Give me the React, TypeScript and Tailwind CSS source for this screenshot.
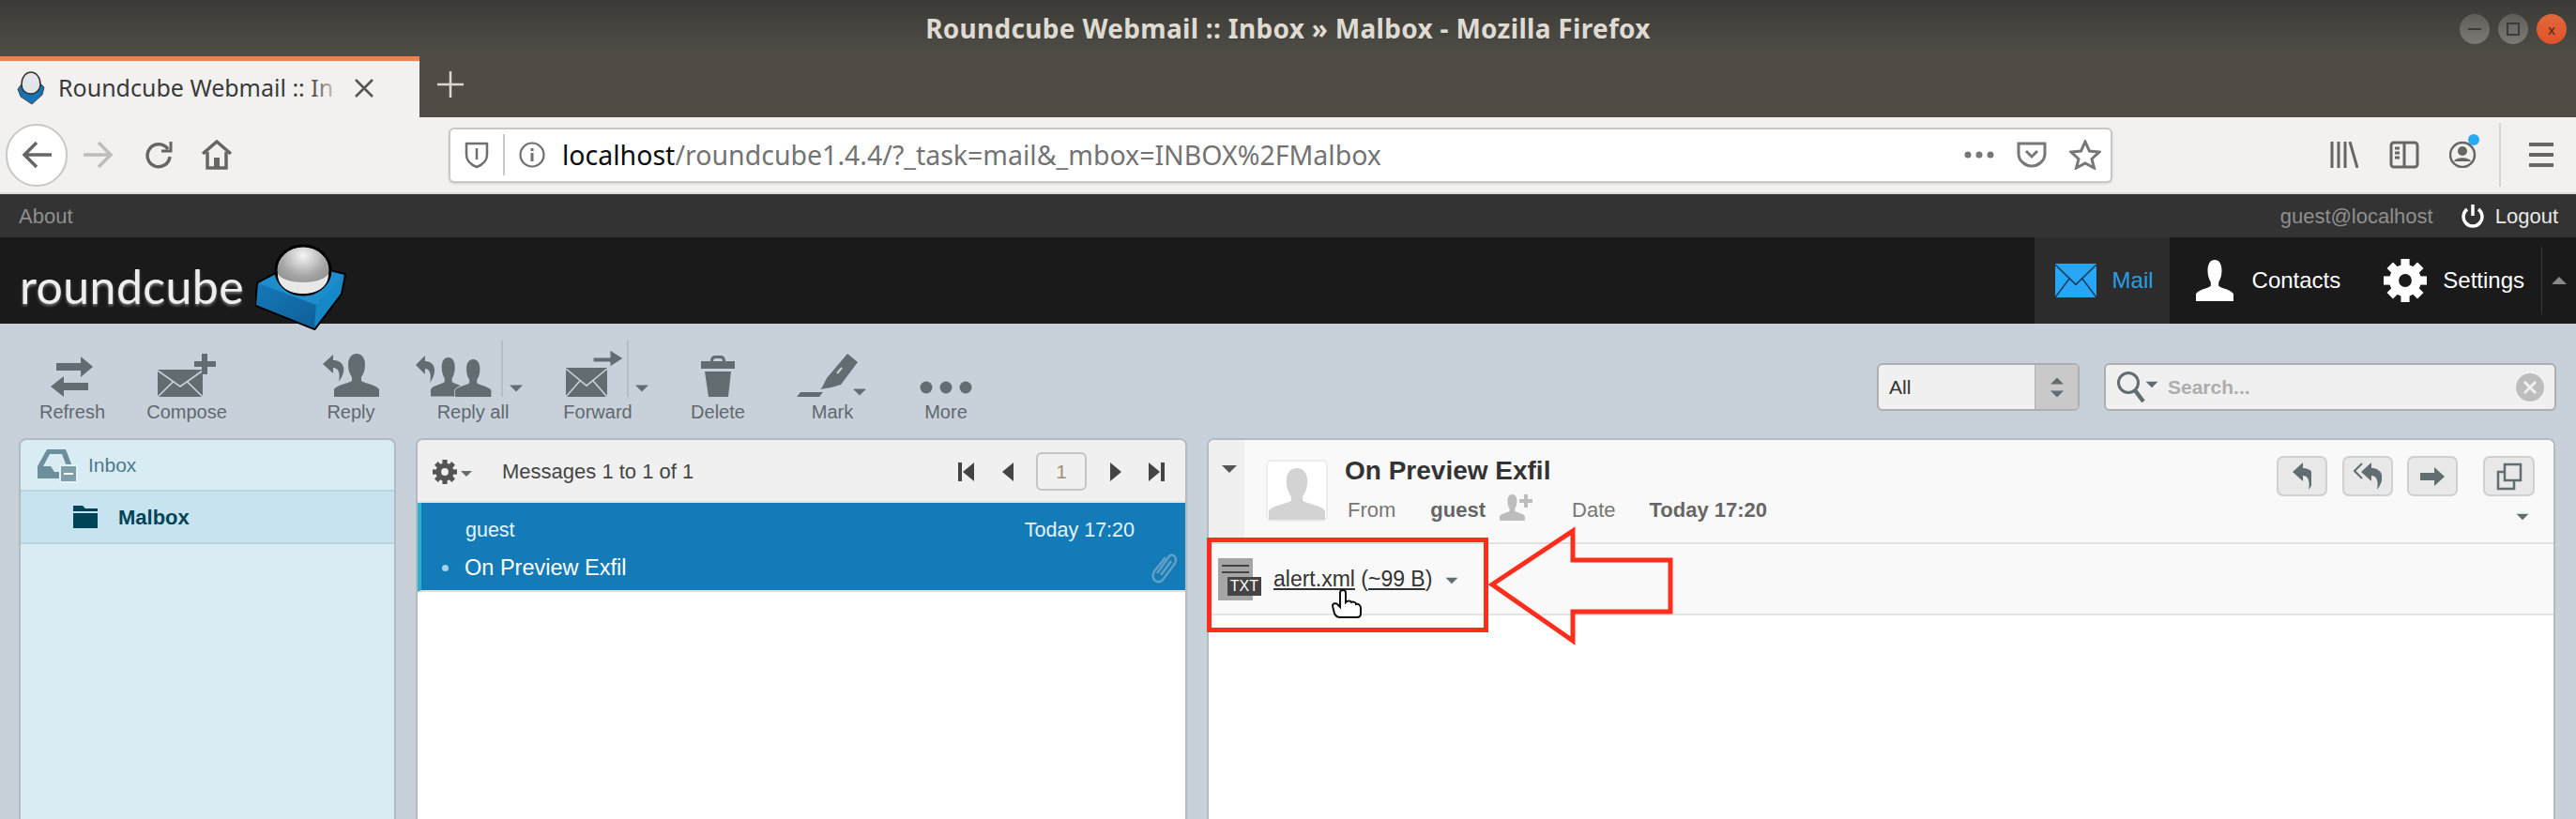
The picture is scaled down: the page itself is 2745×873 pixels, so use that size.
import React from 'react';

const ICON = '#626d72';
const BG = '#c8d1d9';
const SANS = "font-['Liberation_Sans',Arial,sans-serif]";

const PERSON =
  'M24 0C30 0 33 5 33 12C33 18 31 22 29 25L29 29C33 32 45 33 48 38L48 46L0 46L0 38C3 33 15 32 19 29L19 25C17 22 15 18 15 12C15 5 18 0 24 0Z';
const HOOK = 'M0 10L11 0V6C22 6 27 16 17 29C19 19 16 14 11 14V20Z';

function Envelope({ x, y, w, h, line = BG, fill = ICON }: { x: number; y: number; w: number; h: number; line?: string; fill?: string }) {
  return (
    <g transform={`translate(${x} ${y})`}>
      <rect width={w} height={h} fill={fill} />
      <path d={`M0 1L${w / 2} ${h * 0.62}L${w} 1M0 ${h}L${w * 0.36} ${h * 0.42}M${w} ${h}L${w * 0.64} ${h * 0.42}`} fill="none" stroke={line} strokeWidth={1.6} />
    </g>
  );
}

function Caret({ x, y, color = ICON, size = 7, up = false }: { x: number; y: number; color?: string; size?: number; up?: boolean }) {
  const d = up
    ? `M${x - size} ${y + size * 0.5}L${x} ${y - size * 0.5}L${x + size} ${y + size * 0.5}Z`
    : `M${x - size} ${y - size * 0.5}L${x} ${y + size * 0.5}L${x + size} ${y - size * 0.5}Z`;
  return <path d={d} fill={color} />;
}

function Gear({ size, color, hole }: { size: number; color: string; hole: string }) {
  const c = size / 2;
  return (
    <svg width={size} height={size} viewBox={`0 0 ${size} ${size}`} className="shrink-0">
      {[0, 45, 90, 135].map((a) => (
        <rect key={a} x={c - size * 0.1} y={0} width={size * 0.2} height={size} fill={color} transform={`rotate(${a} ${c} ${c})`} />
      ))}
      <circle cx={c} cy={c} r={size * 0.37} fill={color} />
      <circle cx={c} cy={c} r={size * 0.15} fill={hole} />
    </svg>
  );
}

const toolbar: { label: string; w: string; icon: React.ReactNode }[] = [
  {
    label: 'Refresh',
    w: 'w-[80px]',
    icon: (
      <svg width="46" height="43" viewBox="0 0 46 43" fill={ICON}>
        <path d="M6 7H32V0L45 11L32 22V15H6Z" />
        <path d="M40 28H14V21L0 32L14 43V36H40Z" />
      </svg>
    ),
  },
  {
    label: 'Compose',
    w: 'w-[90px] ml-[37px]',
    icon: (
      <svg width="62" height="46" viewBox="0 0 62 46">
        <Envelope x={0} y={17} w={48} h={29} />
        <path d="M47 0H53V8H62V14H53V22H47V14H39V8H47Z" fill={ICON} />
      </svg>
    ),
  },
  {
    label: 'Reply',
    w: 'w-[80px] ml-[90px]',
    icon: (
      <svg width="60" height="46" viewBox="0 0 60 46" fill={ICON}>
        <path d={PERSON} transform="translate(12 0)" />
        <path d={HOOK} stroke={BG} strokeWidth="2" paintOrder="stroke" transform="translate(0 1)" />
      </svg>
    ),
  },
  {
    label: 'Reply all',
    w: 'w-[100px] ml-[40px]',
    icon: (
      <svg width="122" height="60" viewBox="0 0 122 60" fill={ICON} className="shrink-0 -mt-[14px]">
        <path d={PERSON} transform="translate(16 18) scale(.78 .9)" />
        <path d={PERSON} stroke={BG} strokeWidth="2" paintOrder="stroke" transform="translate(42 20) scale(.8 .87)" />
        <path d={HOOK} stroke={BG} strokeWidth="2" paintOrder="stroke" transform="translate(0 16) scale(.9 1)" />
        <rect x="91" y="0" width="2" height="60" fill="#b4bdc5" />
        <Caret x={107} y={51} />
      </svg>
    ),
  },
  {
    label: 'Forward',
    w: 'w-[100px] ml-[33px]',
    icon: (
      <svg width="114" height="60" viewBox="0 0 114 60" fill={ICON} className="shrink-0 -mt-[14px]">
        <Envelope x={23} y={29} w={44} h={31} />
        <path d="M54 21H72V13L86 22L72 31V26H54Z" stroke={BG} strokeWidth="1" transform="translate(-2 -3)" />
        <rect x="88" y="0" width="2" height="60" fill="#b4bdc5" />
        <Caret x={104} y={51} />
      </svg>
    ),
  },
  {
    label: 'Delete',
    w: 'w-[80px] ml-[38px]',
    icon: (
      <svg width="36" height="44" viewBox="0 0 36 44" fill={ICON}>
        <path d="M10 6C10 2 12 0 15 0H21C24 0 26 2 26 6H36V14H0V6ZM13 6H23C23 4 22 3 20 3H16C14 3 13 4 13 6Z" fillRule="evenodd" />
        <path d="M4 17H32L29 44H8Z" />
      </svg>
    ),
  },
  {
    label: 'Mark',
    w: 'w-[80px] ml-[42px]',
    icon: (
      <svg width="76" height="46" viewBox="0 0 76 46" fill={ICON}>
        <path d="M54 0L65 9L47 33L37 36L25 38L27 36L32 26Z" />
        <path d="M43 21L48 15" stroke={BG} strokeWidth="2" />
        <path d="M4 41H28L24 46H0Z" />
        <Caret x={67} y={41} />
      </svg>
    ),
  },
  {
    label: 'More',
    w: 'w-[80px] ml-[41px]',
    icon: (
      <svg width="56" height="14" viewBox="0 0 56 14" fill={ICON} className="mb-[3px]">
        <circle cx="7" cy="7" r="6.5" />
        <circle cx="28" cy="7" r="6.5" />
        <circle cx="49" cy="7" r="6.5" />
      </svg>
    ),
  },
];

function TitleBar() {
  return (
    <div className="relative flex h-[60px] items-center justify-center bg-gradient-to-b from-[#3c3b37] to-[#4f4d46] font-['Noto_Sans',sans-serif] text-[28px] font-bold tracking-[0.3px] text-[#dfdbd2]">
      Roundcube Webmail :: Inbox » Malbox - Mozilla Firefox
      <div className="absolute right-[10px] top-[15px] flex gap-[9px]">
        <div className="flex h-[32px] w-[32px] items-center justify-center rounded-full bg-gradient-to-b from-[#5f5e59] to-[#7b7a74]">
          <div className="h-[2px] w-[14px] bg-[#3c3b37]" />
        </div>
        <div className="flex h-[32px] w-[32px] items-center justify-center rounded-full bg-gradient-to-b from-[#5f5e59] to-[#7b7a74]">
          <div className="h-[14px] w-[14px] border-2 border-[#3c3b37]" />
        </div>
        <div className="flex h-[32px] w-[32px] items-center justify-center rounded-full bg-gradient-to-b from-[#e0683a] to-[#e2522a] text-[15px] font-normal leading-none text-[#3c2a1f]">
          x
        </div>
      </div>
    </div>
  );
}

function TabStrip() {
  return (
    <div className="flex h-[65px] bg-[#504c45]">
      <div className="flex h-full w-[447px] flex-col bg-[#f2f1f0]">
        <div className="h-[5px] bg-[#f08050]" />
        <div className="flex flex-1 items-center pl-[17px] pb-[3px]">
          <svg width="32" height="36" viewBox="0 0 32 36" className="shrink-0">
            <path d="M2 19L8 11H24L30 17L28 25L17 35L5 27Z" fill="#1673b5" stroke="#444" strokeWidth="1" />
            <path d="M16 1C22 1 26 7 26 14C26 20 21 24 16 24C10 24 6 20 6 14C6 7 10 1 16 1Z" fill="#e3e6e8" stroke="#333" strokeWidth="1.5" />
          </svg>
          <div className="relative ml-[13px] w-[302px] whitespace-nowrap font-['Noto_Sans',sans-serif] text-[25px] text-[#3a3a3a]">
            Roundcube Webmail :: In
            <div className="absolute right-0 top-0 h-full w-[34px] bg-gradient-to-r from-transparent to-[#f2f1f0]" />
          </div>
          <svg width="22" height="22" viewBox="0 0 22 22" stroke="#555" strokeWidth="2.5" className="ml-[13px]">
            <path d="M2 2L20 20M20 2L2 20" />
          </svg>
        </div>
      </div>
      <div className="flex w-[66px] items-center justify-center pb-[6px]">
        <svg width="28" height="28" viewBox="0 0 28 28" stroke="#d8d6d1" strokeWidth="2.5">
          <path d="M14 0V28M0 14H28" />
        </svg>
      </div>
    </div>
  );
}

function NavBar() {
  return (
    <div className="flex h-[80px] items-center bg-[#f2f1f0] text-[#666]">
      <div className="ml-[6px] flex h-[67px] w-[66px] shrink-0 items-center justify-center rounded-full border-2 border-[#c9c8c6] bg-white">
        <svg width="32" height="30" viewBox="0 0 32 30" fill="none" stroke="#666" strokeWidth="3.5">
          <path d="M32 15H3M16 2L3 15L16 28" />
        </svg>
      </div>
      <div className="flex w-[66px] shrink-0 justify-center">
        <svg width="32" height="30" viewBox="0 0 32 30" fill="none" stroke="#bcbcbc" strokeWidth="3.5">
          <path d="M0 15H29M16 2L29 15L16 28" />
        </svg>
      </div>
      <div className="flex w-[62px] shrink-0 justify-center">
        <svg width="30" height="30" viewBox="0 0 30 30" fill="none" stroke="#666" strokeWidth="3.5">
          <path d="M25 9A12 12 0 1 0 27 17" />
          <path d="M28 1V11H18" strokeWidth="3" />
        </svg>
      </div>
      <div className="flex w-[62px] shrink-0 justify-center">
        <svg width="32" height="32" viewBox="0 0 32 32" fill="none" stroke="#666" strokeWidth="3.5">
          <path d="M1 15L16 2L31 15" />
          <path d="M6 13V30H26V13" />
          <rect x="13" y="19" width="6" height="11" fill="#666" stroke="none" />
        </svg>
      </div>
      <div className="ml-[216px] flex h-[59px] w-[1773px] shrink-0 items-center rounded-[6px] border-2 border-[#c8c7c4] bg-white shadow-sm">
        <svg width="26" height="30" viewBox="0 0 26 30" fill="none" stroke="#6f6f6f" strokeWidth="2.5" className="ml-[15px]">
          <path d="M2 3H24V15C24 22 18 26 13 28C8 26 2 22 2 15Z" />
          <path d="M13 8V20" />
        </svg>
        <div className="ml-[15px] h-[44px] w-[2px] bg-[#c9c9c9]" />
        <svg width="28" height="28" viewBox="0 0 28 28" fill="none" stroke="#6f6f6f" strokeWidth="2.2" className="ml-[15px]">
          <circle cx="14" cy="14" r="12.5" />
          <path d="M14 12V21M14 7V10" strokeWidth="3" />
        </svg>
        <div className="ml-[18px] whitespace-nowrap font-['Noto_Sans',sans-serif] text-[28.5px] text-[#737373]">
          <span className="text-[#0c0c0d]">localhost</span>/roundcube1.4.4/?_task=mail&amp;_mbox=INBOX%2FMalbox
        </div>
        <div className="ml-auto flex items-center">
          <svg width="32" height="8" viewBox="0 0 32 8" fill="#777">
            <circle cx="4" cy="4" r="3.5" />
            <circle cx="16" cy="4" r="3.5" />
            <circle cx="28" cy="4" r="3.5" />
          </svg>
          <svg width="32" height="28" viewBox="0 0 32 28" fill="none" stroke="#777" strokeWidth="3" className="ml-[24px]">
            <path d="M2 2H30V13C30 21 22 26 16 26C10 26 2 21 2 13Z" />
            <path d="M10 10L16 16L22 10" />
          </svg>
          <svg width="34" height="32" viewBox="0 0 34 32" fill="none" stroke="#777" strokeWidth="3" className="ml-[24px] mr-[10px]">
            <path d="M17 2L21.5 12L32 13L24 20.5L26.5 30L17 25L7.5 30L10 20.5L2 13L12.5 12Z" />
          </svg>
        </div>
      </div>
      <div className="ml-[232px] flex items-center">
        <svg width="30" height="28" viewBox="0 0 30 28" stroke="#666" strokeWidth="3" fill="none">
          <path d="M2 0V28M9 0V28M16 0V28M21 0L29 28" />
        </svg>
        <svg width="32" height="30" viewBox="0 0 32 30" stroke="#666" strokeWidth="3" fill="none" className="ml-[33px]">
          <rect x="2" y="2" width="28" height="26" rx="3" />
          <path d="M16 2V28M6 8H11M6 13H11M6 18H11" />
        </svg>
        <svg width="32" height="36" viewBox="0 0 32 36" className="ml-[32px] -mt-[8px]">
          <circle cx="14" cy="22" r="13" fill="none" stroke="#666" strokeWidth="2.5" />
          <circle cx="14" cy="18" r="5" fill="#666" />
          <path d="M5 29C7 24 21 24 23 29Z" fill="#666" />
          <circle cx="26" cy="6" r="6" fill="#2aa9f3" />
        </svg>
        <div className="ml-[21px] h-[68px] w-[2px] bg-[#d6d5d3]" />
        <div className="ml-[30px] flex w-[26px] flex-col gap-[7px]">
          <div className="h-[4px] bg-[#666]" />
          <div className="h-[4px] bg-[#666]" />
          <div className="h-[4px] bg-[#666]" />
        </div>
      </div>
    </div>
  );
}

function TopLinks() {
  return (
    <div className={`flex h-[48px] items-center justify-between border-t-2 border-[#dddcda] bg-[#333] pl-[20px] pr-[19px] text-[22px] text-[#8f8f8f] ${SANS}`}>
      <span>About</span>
      <div className="flex items-center">
        <span>guest@localhost</span>
        <svg width="24" height="26" viewBox="0 0 24 26" fill="none" stroke="#fff" strokeWidth="3.5" className="ml-[30px]">
          <path d="M12 1V13" />
          <path d="M6 6A10 10 0 1 0 18 6" />
        </svg>
        <span className="ml-[12px] text-[#e8e8e8]">Logout</span>
      </div>
    </div>
  );
}

function Logo() {
  return (
    <>
      <div className="pl-[21px] pt-[27px] font-['Lato',sans-serif] text-[50px] font-normal leading-none tracking-[0.4px] text-[#eee] [text-shadow:0_2px_3px_#777]">
        roundcube
      </div>
      <svg width="98" height="96" viewBox="0 0 98 96" className="absolute left-[272px] top-[7px]">
        <defs>
          <radialGradient id="ball" cx="50%" cy="20%" r="70%">
            <stop offset="0" stopColor="#f6f6f6" />
            <stop offset="0.6" stopColor="#a6a6a6" />
            <stop offset="1" stopColor="#8a8a8a" />
          </radialGradient>
          <linearGradient id="left" x1="0" y1="0" x2="1" y2="1">
            <stop offset="0" stopColor="#1678b8" />
            <stop offset="1" stopColor="#0f5f98" />
          </linearGradient>
        </defs>
        <path d="M3 42L45 20L95 33L91 53L63 90L1 65Z" fill="#1678b8" stroke="#000" strokeWidth="4" strokeLinejoin="round" />
        <path d="M3 42L65 65L63 90L1 65Z" fill="url(#left)" />
        <path d="M65 65L95 33L91 53L63 90Z" fill="#1589c7" />
        <path d="M3 42L45 20L95 33L65 65Z" fill="#1d8dcc" />
        <ellipse cx="51" cy="28" rx="29" ry="26" fill="url(#ball)" stroke="#000" strokeWidth="3" />
        <path d="M24 32C32 44 70 44 78 32C78 46 66 53 51 53C36 53 24 46 24 32Z" fill="#e8e8e8" />
      </svg>
    </>
  );
}

function HeaderTabs() {
  return (
    <div className={`ml-auto flex h-full text-[24px] text-white ${SANS}`}>
      <div className="flex w-[144px] items-center bg-[#2c2c2c] pl-[22px] text-[#2a9ee6]">
        <svg width="44" height="36" viewBox="0 0 44 36">
          <Envelope x={0} y={0} w={44} h={36} line="#1a3a55" fill="#27a6f5" />
        </svg>
        <span className="ml-[17px]">Mail</span>
      </div>
      <div className="flex items-center pl-[28px]">
        <svg width="40" height="44" viewBox="0 0 48 46" preserveAspectRatio="none" fill="#fff">
          <path d={PERSON} />
        </svg>
        <span className="ml-[20px]">Contacts</span>
      </div>
      <div className="ml-[46px] flex items-center">
        <Gear size={46} color="#fff" hole="#1a1a1a" />
        <span className="ml-[17px]">Settings</span>
      </div>
      <div className="ml-[18px] flex w-[37px] items-center">
        <div className="h-[72px] w-[1px] bg-[#3a3a3a]" />
        <svg width="20" height="12" viewBox="0 0 20 12" className="ml-[9px]">
          <Caret x={9} y={6} size={8} color="#8a8a8a" up />
        </svg>
      </div>
    </div>
  );
}

function Toolbar() {
  return (
    <div className={`flex h-[122px] ${SANS}`}>
      <div className="flex pl-[37px] pt-[32px]">
        {toolbar.map((b) => (
          <div key={b.label} className={`flex flex-col items-center ${b.w}`}>
            <div className="flex h-[46px] w-full items-end justify-center">{b.icon}</div>
            <span className="mt-[4px] whitespace-nowrap text-[20px] leading-[24px] text-[#5f686e]">{b.label}</span>
          </div>
        ))}
      </div>
      <div className="ml-auto flex pr-[21px] pt-[42px]">
        <div className="flex h-[51px] w-[216px] overflow-hidden rounded-[6px] border-2 border-[#aeaeae] bg-[#f0f0f0] text-[21px] text-[#333]">
          <span className="flex-1 self-center pl-[11px]">All</span>
          <div className="flex w-[46px] items-center justify-center border-l border-[#b5b5b5] bg-[#c9c9c9]">
            <svg width="16" height="30" viewBox="0 0 16 30">
              <Caret x={8} y={8} up size={7} />
              <Caret x={8} y={22} size={7} />
            </svg>
          </div>
        </div>
        <div className="ml-[26px] flex h-[51px] w-[482px] items-center rounded-[6px] border-2 border-[#aeaeae] bg-[#f0f0f0]">
          <svg width="46" height="36" viewBox="0 0 46 36" fill="none" className="ml-[11px] shrink-0">
            <circle cx="13" cy="13" r="10.5" stroke={ICON} strokeWidth="3" />
            <path d="M20 21L29 33" stroke={ICON} strokeWidth="4.5" />
            <Caret x={38} y={15} size={6.5} />
          </svg>
          <span className="ml-[9px] text-[21px] font-bold text-[#adadad]">Search...</span>
          <div className="ml-auto mr-[11px] flex h-[30px] w-[30px] items-center justify-center rounded-full bg-[#bdbdbd]">
            <svg width="16" height="16" viewBox="0 0 16 16" stroke="#f0f0f0" strokeWidth="3">
              <path d="M2 2L14 14M14 2L2 14" />
            </svg>
          </div>
        </div>
      </div>
    </div>
  );
}

function FolderPanel() {
  return (
    <div className="flex w-[402px] flex-col overflow-hidden rounded-t-[8px] border-x-2 border-t-2 border-[#b2bac2] bg-[#d9ebf3]">
      <div className="flex h-[55px] shrink-0 items-center border-b-2 border-[#bdd3dc] pl-[18px]">
        <svg width="44" height="38" viewBox="0 0 44 38" className="-mb-[2px] shrink-0">
          <path d="M0 32V19L10 1H30L37 19V32ZM6 19H14L18 25H30L31 19L26 6H13Z" fill="#6d8f9b" fillRule="evenodd" />
          <rect x="24" y="18" width="18" height="18" fill="#7e9ea9" stroke="#e6f1f5" strokeWidth="2" />
          <rect x="28" y="26" width="10" height="2" fill="#fff" />
        </svg>
        <span className="ml-[10px] text-[21px] text-[#4b7b8b]">Inbox</span>
      </div>
      <div className="flex h-[56px] shrink-0 items-center border-b-2 border-[#bdd3dc] bg-[#c7e3ef] pl-[56px]">
        <svg width="26" height="24" viewBox="0 0 26 24" className="shrink-0">
          <path d="M0 0H10L13 3H26V6H0Z" fill="#004458" />
          <rect y="8" width="26" height="16" fill="#004458" />
        </svg>
        <span className="ml-[22px] text-[22px] font-bold text-[#004458]">Malbox</span>
      </div>
    </div>
  );
}

function ListPanel() {
  return (
    <div className="ml-[21px] flex w-[822px] flex-col overflow-hidden rounded-t-[8px] border-x-2 border-t-2 border-[#b2bac2] bg-white">
      <div className="flex h-[67px] shrink-0 items-center border-b-2 border-[#e4e4e4] bg-[#f0f0f0] pl-[16px] pt-[2px] text-[#555]">
        <Gear size={26} color="#555" hole="#f0f0f0" />
        <svg width="14" height="10" viewBox="0 0 14 10" className="ml-[3px] mt-[4px]">
          <Caret x={7} y={5} size={6} />
        </svg>
        <span className="ml-[31px] text-[22px] text-[#444]">Messages 1 to 1 of 1</span>
        <div className="ml-auto flex items-center pr-[22px]">
          <svg width="18" height="20" viewBox="0 0 18 20" fill="#444">
            <rect width="4" height="20" />
            <path d="M17 0V20L5 10Z" />
          </svg>
          <svg width="14" height="20" viewBox="0 0 14 20" fill="#444" className="ml-[28px]">
            <path d="M13 0V20L1 10Z" />
          </svg>
          <div className="ml-[23px] flex h-[41px] w-[54px] items-center justify-center rounded-[6px] border-2 border-[#c5c5c5] text-[21px] text-[#a08e78]">1</div>
          <svg width="14" height="20" viewBox="0 0 14 20" fill="#444" className="ml-[24px]">
            <path d="M1 0V20L13 10Z" />
          </svg>
          <svg width="18" height="20" viewBox="0 0 18 20" fill="#444" className="ml-[27px]">
            <path d="M1 0V20L13 10Z" />
            <rect x="14" width="4" height="20" />
          </svg>
        </div>
      </div>
      <div className="flex h-[95px] shrink-0 flex-col border-b-2 border-[#e0e0e0] border-l-[4px] border-l-[#2bb0cf] bg-[#137cb8] pr-[10px] text-[#e6f3fa]">
        <div className="flex pl-[47px] pr-[44px] pt-[13px] text-[21.5px]">
          <span>guest</span>
          <span className="ml-auto">Today 17:20</span>
        </div>
        <div className="flex items-center pl-[22px] pt-[7px]">
          <div className="h-[7px] w-[7px] rounded-full bg-[#a9cfe5]" />
          <span className="ml-[17px] text-[23.5px] text-white">On Preview Exfil</span>
          <svg width="30" height="34" viewBox="0 0 30 34" fill="none" stroke="#5fa0c4" strokeWidth="2.5" className="ml-auto -mr-[3px]">
            <path d="M7 22L20 4C22 1 27 3 27 8C27 10 26 12 25 13L13 29C10 33 4 31 3 27C2 25 3 22 4 20L16 5M11 24L22 9" />
          </svg>
        </div>
      </div>
    </div>
  );
}

function PreviewPanel() {
  return (
    <div className="ml-[21px] flex w-[1437px] flex-col overflow-hidden rounded-t-[8px] border-x-2 border-t-2 border-[#b2bac2] bg-white">
      <div className="flex h-[111px] shrink-0 border-b-2 border-[#e0e0e0] bg-[#f9f9f9]">
        <div className="w-[38px] shrink-0 bg-[#f0f0f0] pl-[13px] pt-[25px]">
          <svg width="18" height="12" viewBox="0 0 18 12">
            <Caret x={9} y={6} size={8} color="#555" />
          </svg>
        </div>
        <div className="ml-[23px] mt-[21px] flex h-[66px] w-[66px] shrink-0 items-end justify-center rounded-[6px] border-2 border-[#ededed] bg-white pt-[7px]">
          <svg width="60" height="55" viewBox="0 0 48 46" preserveAspectRatio="none" fill="#d3d3d3">
            <path d={PERSON} />
          </svg>
        </div>
        <div className="ml-[18px] pt-[17px]">
          <div className="text-[28px] font-bold leading-[32px] text-[#333]">On Preview Exfil</div>
          <div className="mt-[13px] flex items-center text-[22px] leading-[26px] text-[#777]">
            <span className="ml-[3px]">From</span>
            <span className="ml-[37px] font-bold text-[#666]">guest</span>
            <svg width="36" height="28" viewBox="0 0 36 28" fill="#bdbdbd" className="ml-[15px] -mt-[6px]">
              <path d={PERSON} transform="scale(.56 .61)" />
              <path d="M26 0H30V5H35V9H30V14H26V9H21V5H26Z" />
            </svg>
            <span className="ml-[41px]">Date</span>
            <span className="ml-[36px] font-bold text-[#666]">Today 17:20</span>
          </div>
        </div>
        <div className="ml-auto flex flex-col items-end pr-[20px] pt-[17px]">
          <div className="flex">
            <div className="flex h-[43px] w-[54px] items-center justify-center rounded-[7px] border-2 border-[#d0d0d0] bg-[#e8e8e8]">
              <svg width="20" height="30" viewBox="0 0 20 30" fill={ICON}>
                <path d={HOOK} />
              </svg>
            </div>
            <div className="ml-[16px] flex h-[43px] w-[54px] items-center justify-center rounded-[7px] border-2 border-[#d0d0d0] bg-[#e8e8e8]">
              <svg width="30" height="30" viewBox="0 0 30 30" fill={ICON}>
                <path d={HOOK} transform="translate(8 0)" />
                <path d="M9 1L1 9L9 17" fill="none" stroke={ICON} strokeWidth="2" />
              </svg>
            </div>
            <div className="ml-[15px] flex h-[43px] w-[54px] items-center justify-center rounded-[7px] border-2 border-[#d0d0d0] bg-[#e8e8e8]">
              <svg width="26" height="20" viewBox="0 0 26 20" fill={ICON}>
                <path d="M0 6H15V0L26 10L15 20V14H0Z" />
              </svg>
            </div>
            <div className="ml-[27px] flex h-[43px] w-[55px] items-center justify-center rounded-[7px] border-2 border-[#d0d0d0] bg-[#e8e8e8]">
              <svg width="28" height="30" viewBox="0 0 28 30" fill="none" stroke={ICON} strokeWidth="2.5">
                <rect x="9" y="2" width="17" height="17" />
                <path d="M9 10H2V28H19V19" />
              </svg>
            </div>
          </div>
          <svg width="14" height="10" viewBox="0 0 14 10" className="mr-[6px] mt-[17px]">
            <Caret x={7} y={5} size={6.5} />
          </svg>
        </div>
      </div>
      <div className="flex h-[76px] shrink-0 items-center border-b-2 border-[#e4e4e4] bg-[#f9f9f9] pl-[10px]">
        <div className="relative h-[45px] w-[37px] shrink-0 bg-[#a5a5a5] px-[4px] pt-[7px]">
          <div className="h-[2px] bg-[#444]" />
          <div className="mt-[5px] h-[2px] bg-[#444]" />
          <div className="absolute -right-[9px] top-[20px] bg-[#444] px-[3px] text-[16px] font-normal leading-[20px] text-white">TXT</div>
        </div>
        <span className="ml-[22px] text-[23px] text-[#333]">
          <span className="underline underline-offset-2">alert.xml</span> (<span className="underline underline-offset-2">~99 B</span>)
        </span>
        <svg width="14" height="10" viewBox="0 0 14 10" className="ml-[14px] mt-[3px]">
          <Caret x={7} y={5} size={6.5} />
        </svg>
      </div>
    </div>
  );
}

export default function App() {
  return (
    <div className={`relative flex h-[873px] w-[2745px] flex-col overflow-hidden ${SANS}`}>
      <TitleBar />
      <TabStrip />
      <NavBar />
      <TopLinks />
      <div className="relative z-10 flex h-[92px] shrink-0 items-start bg-[#1a1a1a]">
        <Logo />
        <HeaderTabs />
      </div>
      <div className="flex min-h-0 flex-1 flex-col bg-[#c8d1d9]">
        <Toolbar />
        <div className="flex min-h-0 flex-1 pl-[20px]">
          <FolderPanel />
          <ListPanel />
          <PreviewPanel />
        </div>
      </div>
      {/* annotation drawn over the screenshot */}
      <svg width="2745" height="873" viewBox="0 0 2745 873" fill="none" className="pointer-events-none absolute left-0 top-0 z-20">
        <rect x="1288.5" y="575.5" width="295" height="96" stroke="#ff2d1c" strokeWidth="5" />
        <path d="M1590 623L1676 566V597H1780V652H1676V683Z" stroke="#ff2d1c" strokeWidth="5" />
        <path
          d="M1428 632C1428 628 1434 628 1434 632V642C1436 640 1439 640 1440 642C1442 641 1445 642 1445 644C1447 643 1450 645 1450 648V654C1450 657 1448 658 1446 658H1428C1425 658 1423 656 1422 654L1420 646C1420 643 1424 642 1426 645L1428 647Z"
          fill="#fff"
          stroke="#111"
          strokeWidth="2"
        />
      </svg>
    </div>
  );
}
